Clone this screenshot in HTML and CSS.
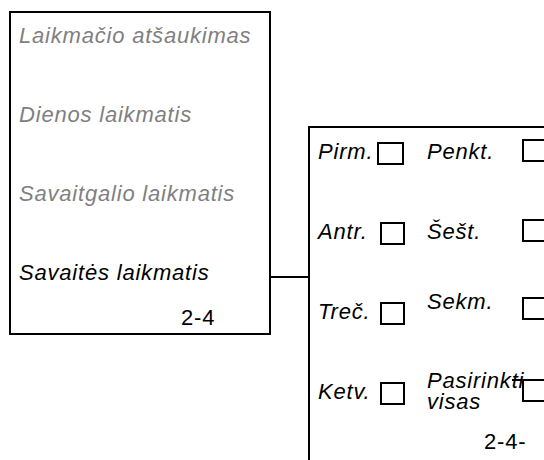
FILE: index.html
```html
<!DOCTYPE html>
<html lang="lt">
<head>
  <meta charset="UTF-8">
  <title>Savaitės laikmatis</title>
  <link rel="stylesheet" href="styles.css">
</head>
<body>
  <div class="screen">
    <div class="menu">
      <p class="menu-item dim">Laikmačio atšaukimas</p>
      <p class="menu-item dim">Dienos laikmatis</p>
      <p class="menu-item dim">Savaitgalio laikmatis</p>
      <p class="menu-item">Savaitės laikmatis</p>
      <p class="page-no">2-4</p>
    </div>

    <div class="link"></div>

    <!-- submenu: week days -->
    <div class="days">
      <span class="day">Pirm.</span>
      <span class="box box-l"></span>
      <span class="day">Penkt.</span>
      <span class="box box-r"></span>

      <span class="day">Antr.</span>
      <span class="box"></span>
      <span class="day">Šešt.</span>
      <span class="box box-r"></span>

      <span class="day">Treč.</span>
      <span class="box"></span>
      <span class="day shift">Sekm.</span>
      <span class="box box-r box-up"></span>

      <span class="day">Ketv.</span>
      <span class="box"></span>
      <span class="day shift two-line">Pasirinkti<br>visas</span>
      <span class="box box-r ext"></span>

      <span class="page-no sub">2-4-</span>
    </div>
  </div>
</body>
</html>
```

FILE: styles.css
```css
body {
  margin: 0;
  width: 544px;
  height: 460px;
  overflow: hidden;
  background: #fff;
  font-family: "Liberation Sans", Arial, sans-serif;
  font-style: italic;
  font-size: 22px;
  letter-spacing: 0.8px;
  color: #000;
}
.screen {
  display: flex;
  align-items: flex-start;
}
p {
  margin: 0;
}
.menu {
  flex-shrink: 0;
  margin: 11px 0 0 9px;
  width: 262px;
  height: 324px;
  box-sizing: border-box;
  border: 2px solid #000;
  padding: 11px 0 0 8px;
  white-space: nowrap;
}
.menu-item {
  line-height: 24px;
  margin-bottom: 55px;
}
.menu-item.dim {
  color: #7f7f7f;
}
.menu .page-no {
  line-height: 24px;
  margin: -34px 0 0 162px;
  font-style: normal;
}
.link {
  flex-shrink: 0;
  width: 37px;
  height: 2px;
  margin-top: 276px;
  background: #000;
}
.days {
  flex-shrink: 0;
  margin-top: 126px;
  width: 236px;
  height: 334px;
  box-sizing: border-box;
  border: 2px solid #000;
  border-right: none;
  border-bottom: none;
  padding: 12px 0 0 8px;
  display: grid;
  grid-template-columns: 62px 47px 95px 22px;
  grid-template-rows: 80px 80px 80px 50px auto;
  align-items: start;
  overflow: hidden;
  white-space: nowrap;
}
.day {
  line-height: 24px;
}
.day.shift {
  margin-top: -10px;
}
.day.two-line {
  line-height: 21px;
}
.box {
  position: relative;
  display: block;
  width: 25px;
  height: 23px;
  box-sizing: border-box;
  border: 2px solid #000;
  margin-top: 2px;
}
.box-l {
  margin-left: -3px;
  width: 27px;
}
.box-r {
  margin-top: -1px;
}
.box-r.box-up {
  margin-top: -3px;
}
.box.ext::before {
  content: "";
  position: absolute;
  left: -12px;
  top: -2px;
  width: 12px;
  height: 2px;
  background: #000;
}
.page-no.sub {
  grid-column: 1 / -1;
  line-height: 24px;
  padding-left: 166px;
  font-style: normal;
}
```
